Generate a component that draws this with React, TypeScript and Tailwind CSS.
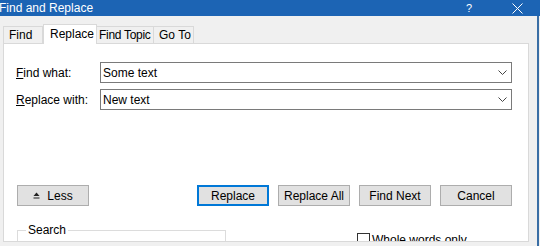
const font = "font-['Segoe_UI','Liberation_Sans',Arial,sans-serif]";

function Chevron() {
  return (
    <svg width="9" height="5" viewBox="0 0 9 5" className="shrink-0" aria-hidden="true">
      <path d="M0.5 0.5 L4.5 4.5 L8.5 0.5" fill="none" stroke="#444" strokeWidth="1" />
    </svg>
  );
}

function Combo({ value }: { value: string }) {
  return (
    <div className="flex-1 h-[21px] border border-[#7a7a7a] bg-white flex items-center pl-[2px] pr-[4px]">
      <span className="flex-1 leading-none">{value}</span>
      <Chevron />
    </div>
  );
}

function Btn({ children, primary }: { children: React.ReactNode; primary?: boolean }) {
  return (
    <button
      className={
        primary
          ? "w-[72px] h-[21px] bg-[#e1e1e1] border-2 border-[#0078d7] flex items-center justify-center leading-none whitespace-nowrap"
          : "w-[72px] h-[21px] bg-[#e1e1e1] border border-[#adadad] flex items-center justify-center leading-none whitespace-nowrap"
      }
    >
      {children}
    </button>
  );
}

export default function App() {
  return (
    <div className={`w-[540px] h-[246px] overflow-hidden flex flex-col bg-[#f0f0f0] text-[12px] text-black ${font}`}>
      {/* Title bar */}
      <div className="h-[16px] shrink-0 bg-[#1c64b4] text-white flex items-center">
        <span className="-ml-[1px] leading-none">Find and Replace</span>
        <span className="ml-auto mr-[40px] leading-none text-[11px]">?</span>
        <svg width="11" height="11" viewBox="0 0 11 11" className="mr-[17px]" aria-hidden="true">
          <path d="M0.5 0.5 L10.5 10.5 M10.5 0.5 L0.5 10.5" stroke="white" strokeWidth="1" />
        </svg>
      </div>

      <div className="flex flex-1 min-h-0">
        <div className="flex-1 flex flex-col pl-[3px] pr-[8px] pb-[4px] min-w-0">
          {/* Tabs */}
          <div className="h-[27px] shrink-0 flex items-end whitespace-nowrap">
            <div className="w-[40px] h-[17px] border border-b-0 border-[#d9d9d9] bg-[#f0f0f0] flex items-center pl-[5px] leading-none">
              Find
            </div>
            <div className="w-[54px] h-[20px] -mb-[1px] relative z-10 border border-b-0 border-[#d9d9d9] bg-white flex items-start pt-[3px] pl-[6px] leading-none">
              Replace
            </div>
            <div className="w-[57px] h-[17px] border border-b-0 border-l-0 border-[#d9d9d9] bg-[#f0f0f0] flex items-center pl-[2px] leading-none tracking-[-0.3px]">
              Find Topic
            </div>
            <div className="w-[40px] h-[17px] border border-b-0 border-l-0 border-[#d9d9d9] bg-[#f0f0f0] flex items-center pl-[5px] leading-none">
              Go To
            </div>
          </div>

          {/* Panel */}
          <div className="flex-1 min-h-0 overflow-hidden bg-white border border-[#d9d9d9] pl-[12px] pr-[16px] pt-[18px] flex flex-col">
            <div className="flex items-center">
              <span className="w-[84px] shrink-0">
                <span className="underline">F</span>ind what:
              </span>
              <Combo value="Some text" />
            </div>
            <div className="flex items-center mt-[6px]">
              <span className="w-[84px] shrink-0">
                <span className="underline">R</span>eplace with:
              </span>
              <Combo value="New text" />
            </div>

            <div className="flex items-center mt-[75px] pl-[1px]">
              <Btn>
                <span className="flex items-center gap-[7px]">
                  <svg width="7" height="7" viewBox="0 0 7 7" aria-hidden="true">
                    <path d="M3.5 0.5 L6.5 4 L0.5 4 Z" fill="#222" />
                    <rect x="0.5" y="5.5" width="6" height="1" fill="#222" />
                  </svg>
                  Less
                </span>
              </Btn>
              <div className="ml-auto flex gap-[9px]">
                <Btn primary>Replace</Btn>
                <Btn>Replace All</Btn>
                <Btn>Find Next</Btn>
                <Btn>Cancel</Btn>
              </div>
            </div>

            <div className="flex items-start mt-[17px] pl-[1px]">
              <fieldset className="w-[209px] h-[40px] border border-[#dcdcdc]">
                <legend className="ml-[8px] px-[2px] leading-[14px]">Search</legend>
              </fieldset>
              <label className="ml-[131px] mt-[10px] flex items-center gap-[2px] leading-none whitespace-nowrap">
                <span className="w-[13px] h-[13px] border border-[#333] bg-white" />
                Whole words only
              </label>
            </div>
          </div>
        </div>
        <div className="w-[2px] bg-[#3a6ea5]" />
        <div className="w-[1px] bg-[#f0f0f0]" />
      </div>
    </div>
  );
}
